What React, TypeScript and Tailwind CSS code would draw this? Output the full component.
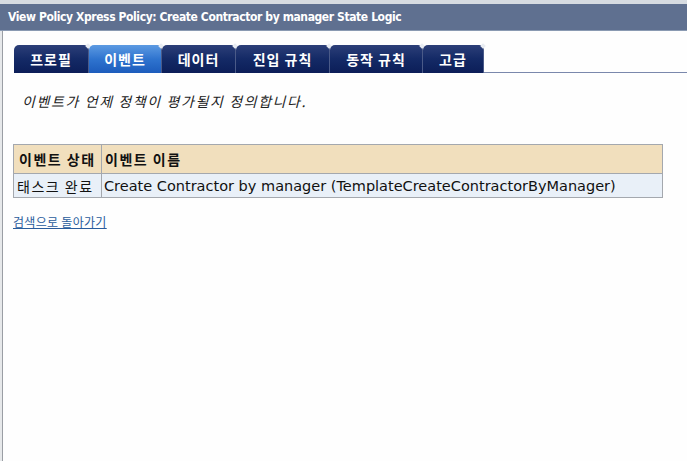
import React from "react";

const tabs = [
  { label: "프로필", w: "w-[75px]", active: false },
  { label: "이벤트", w: "w-[73px]", active: true },
  { label: "데이터", w: "w-[74px]", active: false },
  { label: "진입 규칙", w: "w-[94px]", active: false },
  { label: "동작 규칙", w: "w-[93px]", active: false },
  { label: "고급", w: "w-[61px]", active: false },
];

const kr = { fontFamily: '"Noto Sans CJK KR", sans-serif' };

export default function App() {
  return (
    <div className="w-[687px] h-[461px] bg-[#fefefe] overflow-hidden flex flex-col">
      <div className="h-[4px] bg-[#d6dbe1]" />
      <div
        className="h-[27px] bg-[#5f7090] border-b border-[#8a9ab2] flex items-center pl-[8px] text-white font-bold text-[12px] tracking-[-0.4px]"
        style={{ fontFamily: '"DejaVu Sans Condensed", "DejaVu Sans", sans-serif' }}
      >
        View Policy Xpress Policy: Create Contractor by manager State Logic
      </div>
      <div className="flex flex-1">
        <div className="w-[2px] bg-[#e6e8ea]" />
        <div className="w-[1px] bg-[#9a9ea4]" />
        <div className="flex-1 flex flex-col">
          <div className="flex items-end pl-[11px] pt-[14px]">
            {tabs.map((t) => (
              <div
                key={t.label}
                className={`${t.w} h-[28px] relative flex items-center justify-center rounded-t-[5px] border-r border-[#4a5a88] text-white font-bold text-[14px] tracking-[1px] ${
                  t.active
                    ? "bg-gradient-to-b from-[#5c9ae2] via-[#2f74cf] to-[#1c5cbc]"
                    : "bg-gradient-to-b from-[#2c3f78] via-[#142a66] to-[#0c1e58]"
                }`}
                style={kr}
              >
                <span className="absolute right-[-2px] top-[-1px] w-[4px] h-[4px] bg-[#e8ecf2] rotate-45" />
                {t.label}
              </div>
            ))}
            <div className="flex-1 border-b border-[#7a88ac] h-[2px]" />
          </div>
          <div
            className="pl-[19px] pt-[18px] text-[14px] italic text-[#222] tracking-[1.6px] leading-[20px]"
            style={kr}
          >
            이벤트가 언제 정책이 평가될지 정의합니다.
          </div>
          <div className="pl-[10px] pt-[33px]">
            <table
              className="w-[650px] border-collapse border border-[#a4a8ae] text-[14px] text-[#111]"
              style={{ fontFamily: '"DejaVu Sans", "Noto Sans CJK KR", sans-serif' }}
            >
              <thead>
                <tr className="bg-[#f1dfbd] h-[29px]">
                  <th
                    className="w-[88px] text-left font-bold px-[5px] border border-[#a4a8ae] tracking-[1.5px] whitespace-nowrap"
                    style={kr}
                  >
                    이벤트 상태
                  </th>
                  <th
                    className="text-left font-bold px-[3px] border border-[#a4a8ae] tracking-[1.5px]"
                    style={kr}
                  >
                    이벤트 이름
                  </th>
                </tr>
              </thead>
              <tbody>
                <tr className="bg-[#e9f0f8] h-[24px]">
                  <td
                    className="px-[3px] py-0 border border-[#a4a8ae] tracking-[1.5px] whitespace-nowrap leading-[20px]"
                    style={kr}
                  >
                    태스크 완료
                  </td>
                  <td className="px-[2px] py-0 border border-[#a4a8ae] text-[14.5px] whitespace-nowrap leading-[20px]">
                    Create Contractor by manager (TemplateCreateContractorByManager)
                  </td>
                </tr>
              </tbody>
            </table>
          </div>
          <div className="pl-[10px] pt-[15px] leading-[16px]">
            <a href="#" className="text-[12px] text-[#2a5c9c] underline tracking-[0.3px]" style={kr}>
              검색으로 돌아가기
            </a>
          </div>
        </div>
      </div>
    </div>
  );
}
